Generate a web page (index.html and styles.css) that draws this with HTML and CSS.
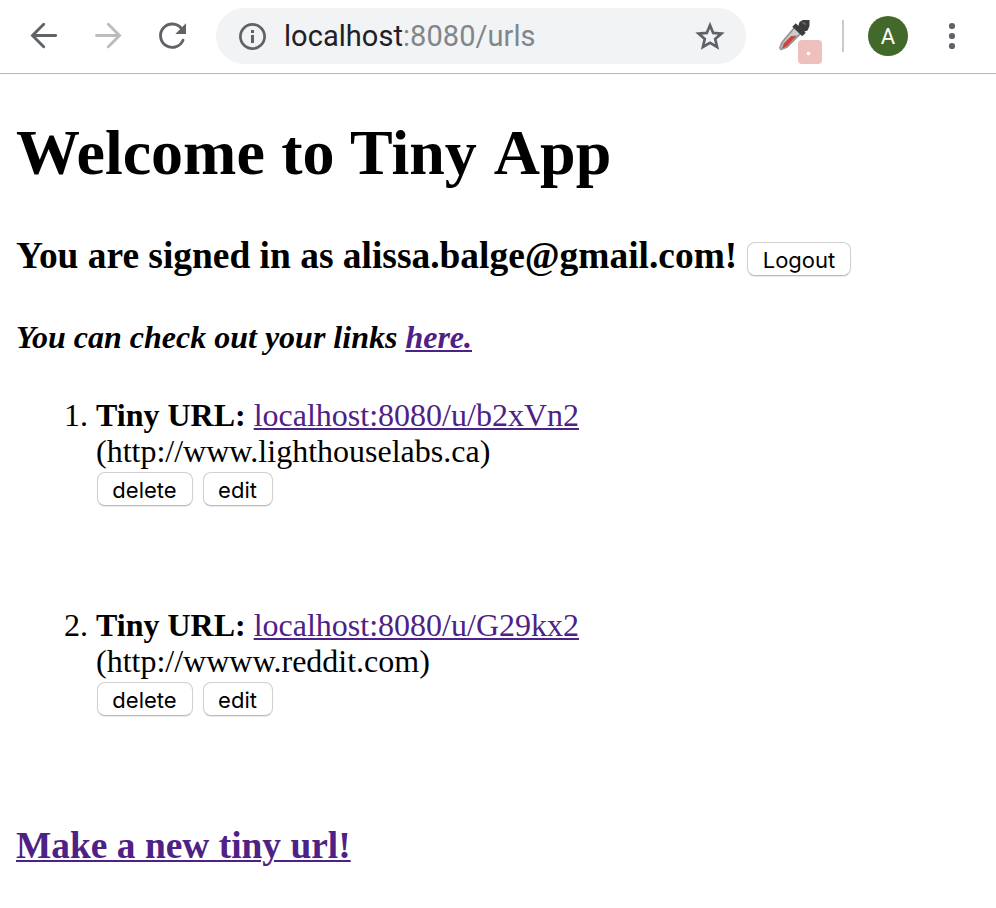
FILE: index.html
```html
<!DOCTYPE html>
<html lang="en">
<head>
<meta charset="utf-8">
<title>Tiny App</title>
<link rel="stylesheet" href="styles.css">
</head>
<body>
<header class="toolbar">
  <svg class="nav-icons" width="216" height="73" viewBox="0 0 216 73" fill="none">
    <g stroke="#5f6368" stroke-width="2.9" stroke-linecap="round">
      <path d="M55.700 35.500H33M43.700 24.300L32.500 35.500L43.700 46.700"/>
      <path stroke="#babcbe" d="M96.500 35.500H119M108.300 24.300L119.500 35.500L108.300 46.700"/>
      <path d="M181.500 28.500A11.700 11.700 0 1 0 183 40.200"/>
    </g>
    <path fill="#5f6368" d="M186 23.300V34H175.300Z"/>
  </svg>
  <div class="omnibox">
    <svg width="28" height="28" viewBox="0 0 28 28"><circle cx="14.500" cy="14.500" r="12.100" fill="none" stroke="#5f6368" stroke-width="2.700"/><path fill="#5f6368" d="M13 8H16V11H13ZM13 13H16V21H13Z"/></svg>
    <span class="address">localhost<span class="path">:8080/urls</span></span>
    <svg class="star" width="30" height="30" viewBox="0 0 30 30"><path fill="none" stroke="#5f6368" stroke-width="2.700" d="M15 4.300L18.200 11.900L26.400 12.600L20.200 18L22.100 26L15 21.800L7.900 26L9.800 18L3.600 12.600L11.800 11.900Z"/></svg>
  </div>
  <div class="extension">
    <svg width="34" height="34" viewBox="0 0 34 34">
      <path d="M17 8L23 14L9 28L3 30.500L2 29L4 23.500Z" fill="#d0cccc" stroke="#969696" stroke-width="1.800"/>
      <path d="M13 17.500L18 17L8.500 27L4.500 29L6 24.500Z" fill="#cf4238" stroke="#cf4238" stroke-width=".8"/>
      <path d="M16 6L26 15.500" stroke="#3b3d3f" stroke-width="5"/>
      <path d="M20 8L21.500 3L25 1H31.500V7L29.500 11.500L25 13Z" fill="#3a3c3e"/>
      <path d="M24.500 3.500L28 5.500" stroke="#66686a" stroke-width="1.500"/>
    </svg>
    <span class="badge"></span>
  </div>
  <span class="divider"></span>
  <span class="avatar">A</span>
  <svg class="menu" width="8" height="28" viewBox="0 0 8 28" fill="#5f6368"><circle cx="4" cy="4" r="3.100"/><circle cx="4" cy="14" r="3.100"/><circle cx="4" cy="24" r="3.100"/></svg>
</header>
<main class="page">
  <h1>Welcome to Tiny <span class="app">App</span></h1>
  <h3 class="signed-in"><span class="user">You are signed in as alissa.balge@gmail.com!</span><button class="logout">Logout</button></h3>
  <h4>You can check out your links <a href="#">here.</a></h4>
  <ol>
    <li>
      <div><b>Tiny URL:</b> <a href="#">localhost:8080/u/b2xVn2</a></div>
      <div>(http://www.lighthouselabs.ca)</div>
      <div class="actions"><button class="delete">delete</button><button class="edit">edit</button></div>
    </li>
    <li>
      <div><b>Tiny URL:</b> <a href="#">localhost:8080/u/G29kx2</a></div>
      <div>(http://wwww.reddit.com)</div>
      <div class="actions"><button class="delete">delete</button><button class="edit">edit</button></div>
    </li>
  </ol>
  <h3 class="create"><a href="#">Make a new tiny url!</a></h3>
</main>
</body>
</html>
```
FILE: styles.css
```css
* { box-sizing: border-box; }
body {
  margin: 0;
  background: #fff;
  color: #000;
  font: 32px/36px "Liberation Serif", "Times New Roman", serif;
}
.toolbar {
  display: flex;
  align-items: center;
  height: 74px;
  border-bottom: 1px solid #b4b5b6;
}
.nav-icons { flex: none; }
.omnibox {
  display: flex;
  align-items: center;
  width: 530px;
  height: 56px;
  margin-bottom: 1px;
  padding: 0 21px 0 22px;
  border-radius: 28px;
  background: #f1f3f4;
}
.address {
  margin-left: 18px;
  color: #202124;
  font: 29px/36px Roboto, sans-serif;
  letter-spacing: 0.05px;
}
.path { color: #80868b; }
.star { margin-left: auto; }
.extension {
  position: relative;
  width: 44px;
  height: 46px;
  margin: 0 0 0 32px;
}
.extension svg { display: block; margin-top: 5px; }
.badge {
  position: absolute;
  right: 0;
  bottom: -4px;
  width: 24px;
  height: 24px;
  border-radius: 4px;
  background: radial-gradient(circle at 10.5px 13.5px, #fff 1.5px, #edc0be 2.2px);
}
.divider {
  width: 2px;
  height: 32px;
  margin: 0 24px 1px 20px;
  background: #cacbcc;
}
.avatar {
  width: 40px;
  height: 40px;
  margin-bottom: 1px;
  border-radius: 50%;
  background: #42692a;
  color: #fff;
  font: 22px/41px Roboto, sans-serif;
  text-align: center;
}
.menu { margin-left: 40px; margin-bottom: 1px; }
.page { padding: 42px 16px 0 16px; }
h1, h3, h4, ol { margin: 0; }
h1 { font-size: 64px; line-height: 74px; word-spacing: 0.5px; }
.app { margin-left: 0.5px; }
h3 { font-size: 37.44px; line-height: 42px; }
h4 { margin-top: 42px; font-size: 32px; font-style: italic; }
.signed-in { display: flex; align-items: flex-start; margin-top: 45px; }
.user { width: 731px; white-space: nowrap; }
a {
  color: #4e2186;
  text-decoration: underline 2px;
  text-underline-offset: 2px;
}
ol { margin-top: 42px; padding-left: 80px; }
li { height: 210px; }
.actions { display: flex; gap: 10px; padding: 3px 0 0 1px; }
button {
  height: 34px;
  padding: 0;
  border: 1px solid #d0d0d0;
  border-bottom-color: #bcbcbc;
  border-radius: 8px;
  background: #fff;
  box-shadow: 0 1px 1px #00000018;
  color: #000;
  font: 22px/34px Inter, sans-serif;
}
.logout { width: 104px; margin-top: 7px; }
.delete, .edit { padding-right: 1px; }
.delete { width: 96px; }
.edit { width: 70px; }
.create { margin-top: 8px; }
```
